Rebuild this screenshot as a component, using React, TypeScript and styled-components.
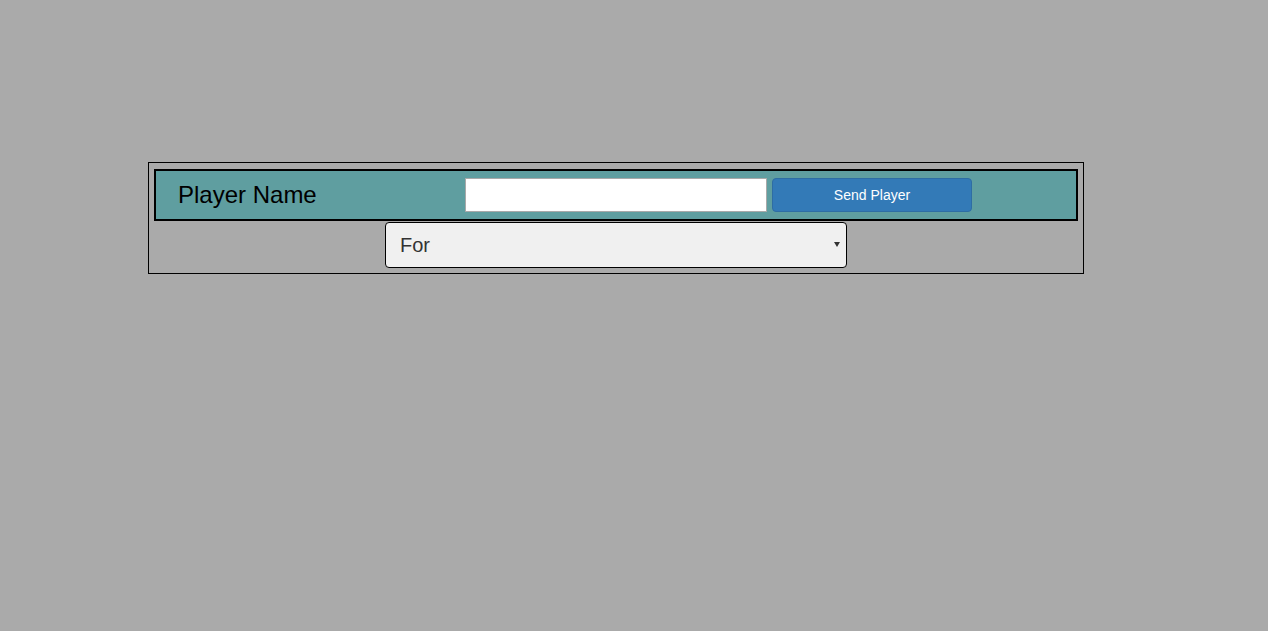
import styled, { createGlobalStyle } from "styled-components";

const GlobalStyle = createGlobalStyle`
  html, body {
    margin: 0;
    padding: 0;
    background: #aaaaaa;
    font-family: "Liberation Sans", Arial, sans-serif;
  }
`;

const Page = styled.div`
  min-height: 631px;
  padding: 162px 0 0 148px;
  box-sizing: border-box;
`;

const Frame = styled.div`
  width: 936px;
  box-sizing: border-box;
  border: 1px solid #000;
  padding: 6px 5px 5px;
  display: flex;
  flex-direction: column;
  align-items: center;
  gap: 1px;
`;

const Bar = styled.div`
  align-self: stretch;
  height: 52px;
  box-sizing: border-box;
  border: 2px solid #000;
  background: #5f9ea0;
  display: flex;
  align-items: center;
`;

const Label = styled.div`
  width: 309px;
  box-sizing: border-box;
  padding-left: 22px;
  font-size: 24px;
  color: #000;
`;

const NameInput = styled.input`
  width: 302px;
  height: 34px;
  box-sizing: border-box;
  border: 1px solid #a9a9a9;
  background: #fff;
  margin: 0 5px 0 0;
  padding: 0 6px;
  font-size: 14px;
  font-family: inherit;
`;

const SendButton = styled.button`
  width: 200px;
  height: 34px;
  box-sizing: border-box;
  border: 1px solid #2e6da4;
  border-radius: 4px;
  background: #337ab7;
  color: #fff;
  font-family: "Liberation Sans", Arial, sans-serif;
  font-size: 14px;
`;

const PickerWrap = styled.div`
  position: relative;
  width: 462px;
  height: 46px;
`;

const Picker = styled.select`
  appearance: none;
  -webkit-appearance: none;
  width: 100%;
  height: 100%;
  box-sizing: border-box;
  border: 1px solid #000;
  border-radius: 4px;
  background-color: #f0f0f0;
  color: #333;
  padding: 0 24px 0 14px;
  font-family: "Liberation Sans", Arial, sans-serif;
  font-size: 20px;
`;

const Caret = styled.svg`
  position: absolute;
  right: 7px;
  top: 20px;
  width: 6px;
  height: 5px;
  pointer-events: none;
`;

export default function App() {
  return (
    <>
      <GlobalStyle />
      <Page>
        <Frame>
          <Bar>
            <Label>Player Name</Label>
            <NameInput type="text" />
            <SendButton>Send Player</SendButton>
          </Bar>
          <PickerWrap>
            <Picker defaultValue="For">
              <option value="For">For</option>
              <option value="Against">Against</option>
            </Picker>
            <Caret viewBox="0 0 6 5">
              <path d="M0 0 L6 0 L3 5 Z" fill="#333" />
            </Caret>
          </PickerWrap>
        </Frame>
      </Page>
    </>
  );
}
